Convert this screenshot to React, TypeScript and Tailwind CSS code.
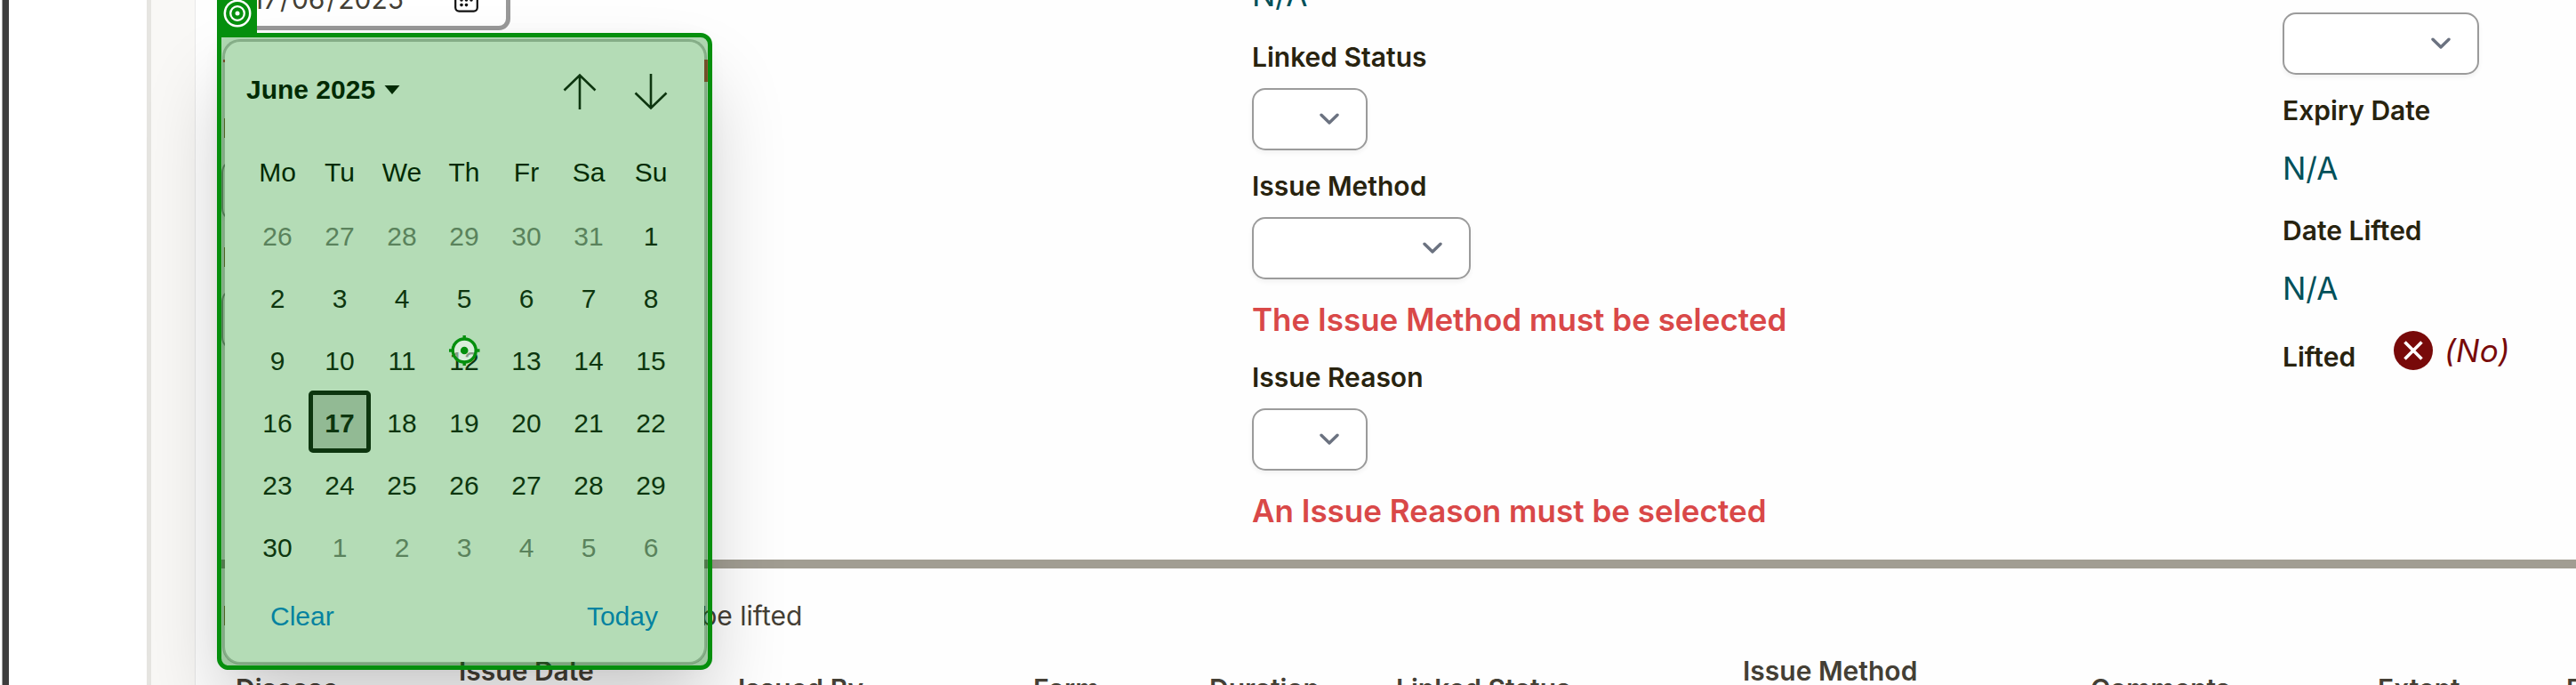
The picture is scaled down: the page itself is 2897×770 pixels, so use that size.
import React from "react";

const DAYS = ["Mo", "Tu", "We", "Th", "Fr", "Sa", "Su"];
const DATES = [
  26, 27, 28, 29, 30, 31, 1, 2, 3, 4, 5, 6, 7, 8, 9, 10, 11, 12, 13, 14, 15, 16, 17, 18, 19, 20, 21, 22, 23, 24, 25,
  26, 27, 28, 29, 30, 1, 2, 3, 4, 5, 6,
];

function Label({ children, className = "" }: { children: React.ReactNode; className?: string }) {
  return (
    <div className={`h-10 whitespace-nowrap text-[30px] leading-10 font-semibold text-[#28230f] ${className}`}>
      {children}
    </div>
  );
}

function Value({ children }: { children: React.ReactNode }) {
  return <div className="h-[50px] text-[35px] leading-[50px] text-[#00505a]">{children}</div>;
}

function FieldError({ children }: { children: React.ReactNode }) {
  return <div className="my-5 h-[50px] whitespace-nowrap text-[35px] leading-[50px] font-semibold text-[#d94848]">{children}</div>;
}

function Select({ className }: { className: string }) {
  return (
    <div
      className={`flex h-[70px] items-center justify-end rounded-[15px] border-2 border-[#9b9b9b] bg-white pr-[30px] shadow-[0_3px_5px_rgba(0,0,0,0.05)] ${className}`}
    >
      <svg width="22" height="14" viewBox="0 0 22 14" fill="none" stroke="#6b7280" strokeWidth="3.4" strokeLinecap="round" strokeLinejoin="round">
        <path d="M2 2.2 11 11 20 2.2" />
      </svg>
    </div>
  );
}

function DateInput() {
  return (
    <div className="-mt-[41px] flex h-[75px] w-[325px] items-end rounded-[13px] border-[5px] border-[#999] bg-white pr-[31px] pb-[10px]">
      <span className="mr-[57px] h-10 flex-1 text-right text-[30px] leading-10 whitespace-nowrap text-[#443f35]">
        17<span className="mx-[2px]">/</span>06<span className="mx-[2px]">/</span>2025
      </span>
      <svg className="mb-[5px]" width="27" height="28" viewBox="0 0 27 28" fill="none" stroke="#111" strokeWidth="2.2">
        <rect x="1.2" y="3" width="24.6" height="23.6" rx="4" />
        <path d="M1 9h25" />
        <g fill="#111" stroke="none">
          <circle cx="8" cy="14" r="1.8" />
          <circle cx="13.5" cy="14" r="1.8" />
          <circle cx="19" cy="14" r="1.8" />
          <circle cx="8" cy="19.6" r="1.8" />
          <circle cx="13.5" cy="19.6" r="1.8" />
        </g>
      </svg>
    </div>
  );
}

function Calendar() {
  return (
    <div className="absolute top-[44px] left-[250px] flex h-[703px] w-[545px] flex-col rounded-[20px] border-[3px] border-black/25 bg-white bg-clip-padding font-['Liberation_Sans',Arial,sans-serif] text-[30px] text-[#101010] shadow-[0_50px_90px_rgba(0,0,0,0.2),0_0_24px_rgba(0,0,0,0.06)]">
      <div className="flex h-[108px] items-center pr-[41px] pl-[24px]">
        <span className="pb-[1px] font-bold text-black">June 2025</span>
        <svg className="ml-[10px]" width="18" height="10" viewBox="0 0 18 10">
          <path d="M0.5 0h17L9 10z" fill="#000" />
        </svg>
        <span className="flex-1" />
        <svg className="mt-[4px]" width="38" height="42" viewBox="0 0 38 42" fill="none" stroke="#101010" strokeWidth="2.6">
          <path d="M19 41V2M1.5 19.5 19 2.5l17.5 17" />
        </svg>
        <svg className="mt-[4px] ml-[42px]" width="38" height="42" viewBox="0 0 38 42" fill="none" stroke="#101010" strokeWidth="2.6">
          <path d="M19 1v39M1.5 22.5l17.5 17 17.5-17" />
        </svg>
      </div>
      <div className="mx-[24px] grid h-[74px] grid-cols-[repeat(7,70px)]">
        {DAYS.map((d) => (
          <span key={d} className="text-center leading-[77px] text-black">
            {d}
          </span>
        ))}
      </div>
      <div className="mx-[24px] grid grid-cols-[repeat(7,70px)] auto-rows-[70px]">
        {DATES.map((n, i) =>
          i === 22 ? (
            <span key={i} className="rounded-[5px] border-[5px] border-[#101010] bg-[#cfcfcf] text-center leading-[63px] font-bold">
              {n}
            </span>
          ) : (
            <span key={i} className={`text-center leading-[73px] ${i < 6 || i > 35 ? "text-[#7f7f7f]" : ""}`}>
              {n}
            </span>
          ),
        )}
      </div>
      <div className="flex h-[86px] items-center justify-between pr-[52px] pl-[51px] text-[#047fe0]">
        <span>Clear</span>
        <span>Today</span>
      </div>
    </div>
  );
}

function Highlight() {
  return (
    <>
      <div className="absolute top-[37px] left-[244px] flex h-[716px] w-[557px] rounded-[13px] rounded-tl-none border-[5px] border-[#058f0d] bg-[#058c0c]/30" />
      <div className="absolute top-0 left-[244px] flex h-[38px] w-[45px] justify-center bg-[#058f0d]">
        <svg className="-mt-px" width="32" height="32" viewBox="0 0 32 32" fill="none" stroke="#fff">
          <circle cx="16" cy="16" r="14.2" strokeWidth="2.5" />
          <circle cx="16" cy="16" r="7.8" strokeWidth="2.3" />
          <circle cx="16" cy="16" r="2.5" fill="#fff" stroke="none" />
        </svg>
      </div>
      <svg className="absolute top-[376px] left-[504px]" width="36" height="36" viewBox="0 0 36 36" fill="none" stroke="#058f0d" strokeWidth="3.4">
        <circle cx="18.2" cy="18" r="13" fill="#fff" fillOpacity="0.5" />
        <path d="M18.2 1v5M18.2 30v5M1 18h5M30.5 18h5" />
        <circle cx="18.2" cy="18" r="4.3" fill="#058f0d" stroke="none" />
      </svg>
    </>
  );
}

const HEADERS: { text: string; width: string; raised?: boolean }[] = [
  { text: "Disease", width: "w-[251px]" },
  { text: "Issue Date", width: "w-[314px]", raised: true },
  { text: "Issued By", width: "w-[332px]" },
  { text: "Form", width: "w-[198px]" },
  { text: "Duration", width: "w-[210px]" },
  { text: "Linked Status", width: "w-[390px]" },
  { text: "Issue Method", width: "w-[391px]", raised: true },
  { text: "Comments", width: "w-[323px]" },
  { text: "Extent", width: "w-[212px]" },
  { text: "Expiry", width: "w-[100px]" },
];

export default function App() {
  return (
    <div className="relative flex h-[770px] w-[2897px] overflow-hidden bg-white font-[Inter,sans-serif]">
      <div className="ml-[2px] w-2 shrink-0 border-l border-[#a0a0a0] bg-[#3d3d3d]" />
      <div className="w-[155px] shrink-0 bg-white" />
      <div className="w-[5px] shrink-0 bg-[#e6e5e1]" />
      <div className="w-[49px] shrink-0 bg-[#f9f8f6]" />
      <main className="w-[2678px] shrink-0 border-l border-[#e8e8e8] bg-[#fefefe]">
        <div className="ml-[29px] grid h-[629px] grid-cols-[1159px_1159px_330px]">
          <div>
            <DateInput />
            <div className="my-5 flex h-[50px] w-[548px] items-start justify-between pt-[13px]">
              <span className="ml-[2px] h-[3px] w-3 bg-[#d94848]" />
              <span className="h-[25px] w-4 bg-[#d94848]" />
            </div>
            <div className="mb-[24px] flex h-[31px] items-end pl-[3px]">
              <span className="h-[22px] w-1 bg-[#92703a]" />
            </div>
            <Select className="w-[130px]" />
            <div className="mt-5 mb-[24px] flex h-[31px] items-end pl-[3px]">
              <span className="h-[22px] w-1 bg-[#92703a]" />
            </div>
            <Select className="w-[220px]" />
          </div>
          <div>
            <div className="-mt-[31px] mb-[25px]">
              <Value>N/A</Value>
            </div>
            <Label className="mb-[15px]">Linked Status</Label>
            <Select className="mb-5 w-[130px]" />
            <Label className="mb-[15px]">Issue Method</Label>
            <Select className="w-[246px]" />
            <FieldError>The Issue Method must be selected</FieldError>
            <Label className="mb-[15px]">Issue Reason</Label>
            <Select className="w-[130px]" />
            <FieldError>An Issue Reason must be selected</FieldError>
          </div>
          <div>
            <Select className="mt-[14px] mb-5 w-[221px]" />
            <Label className="mb-5">Expiry Date</Label>
            <Value>N/A</Value>
            <Label className="mt-[25px] mb-5">Date Lifted</Label>
            <Value>N/A</Value>
            <div className="mt-5 flex items-start">
              <Label className="mt-[12px] w-[125px]">Lifted</Label>
              <svg className="mt-[3px]" width="44" height="44" viewBox="0 0 44 44">
                <circle cx="22" cy="22" r="22" fill="#780a0a" />
                <path d="M12.5 12.5l19 19M31.5 12.5l-19 19" stroke="#fff" strokeWidth="3.6" />
              </svg>
              <span className="ml-[13px] text-[35px] leading-[50px] tracking-[0.3px] text-[#780a0a] italic">(No)</span>
            </div>
          </div>
        </div>
        <div className="ml-[29px] h-[10px] bg-[#a19d92]" />
        <div className="ml-[29px] flex h-[95px] pt-[33px] text-[30px] leading-10 text-[#443f35]">
          <span className="mt-[9px] ml-[3px] h-[22px] w-1 bg-[#92703a]" />
          <span className="ml-[532px] whitespace-nowrap">be lifted</span>
        </div>
        <div className="ml-[45px] flex h-[60px] text-[30px] leading-10 font-semibold whitespace-nowrap text-[#443f35]">
          {HEADERS.map((h) => (
            <span key={h.text} className={`shrink-0 ${h.width} ${h.raised ? "" : "pt-5"}`}>
              {h.text}
            </span>
          ))}
        </div>
      </main>
      <Calendar />
      <Highlight />
    </div>
  );
}
